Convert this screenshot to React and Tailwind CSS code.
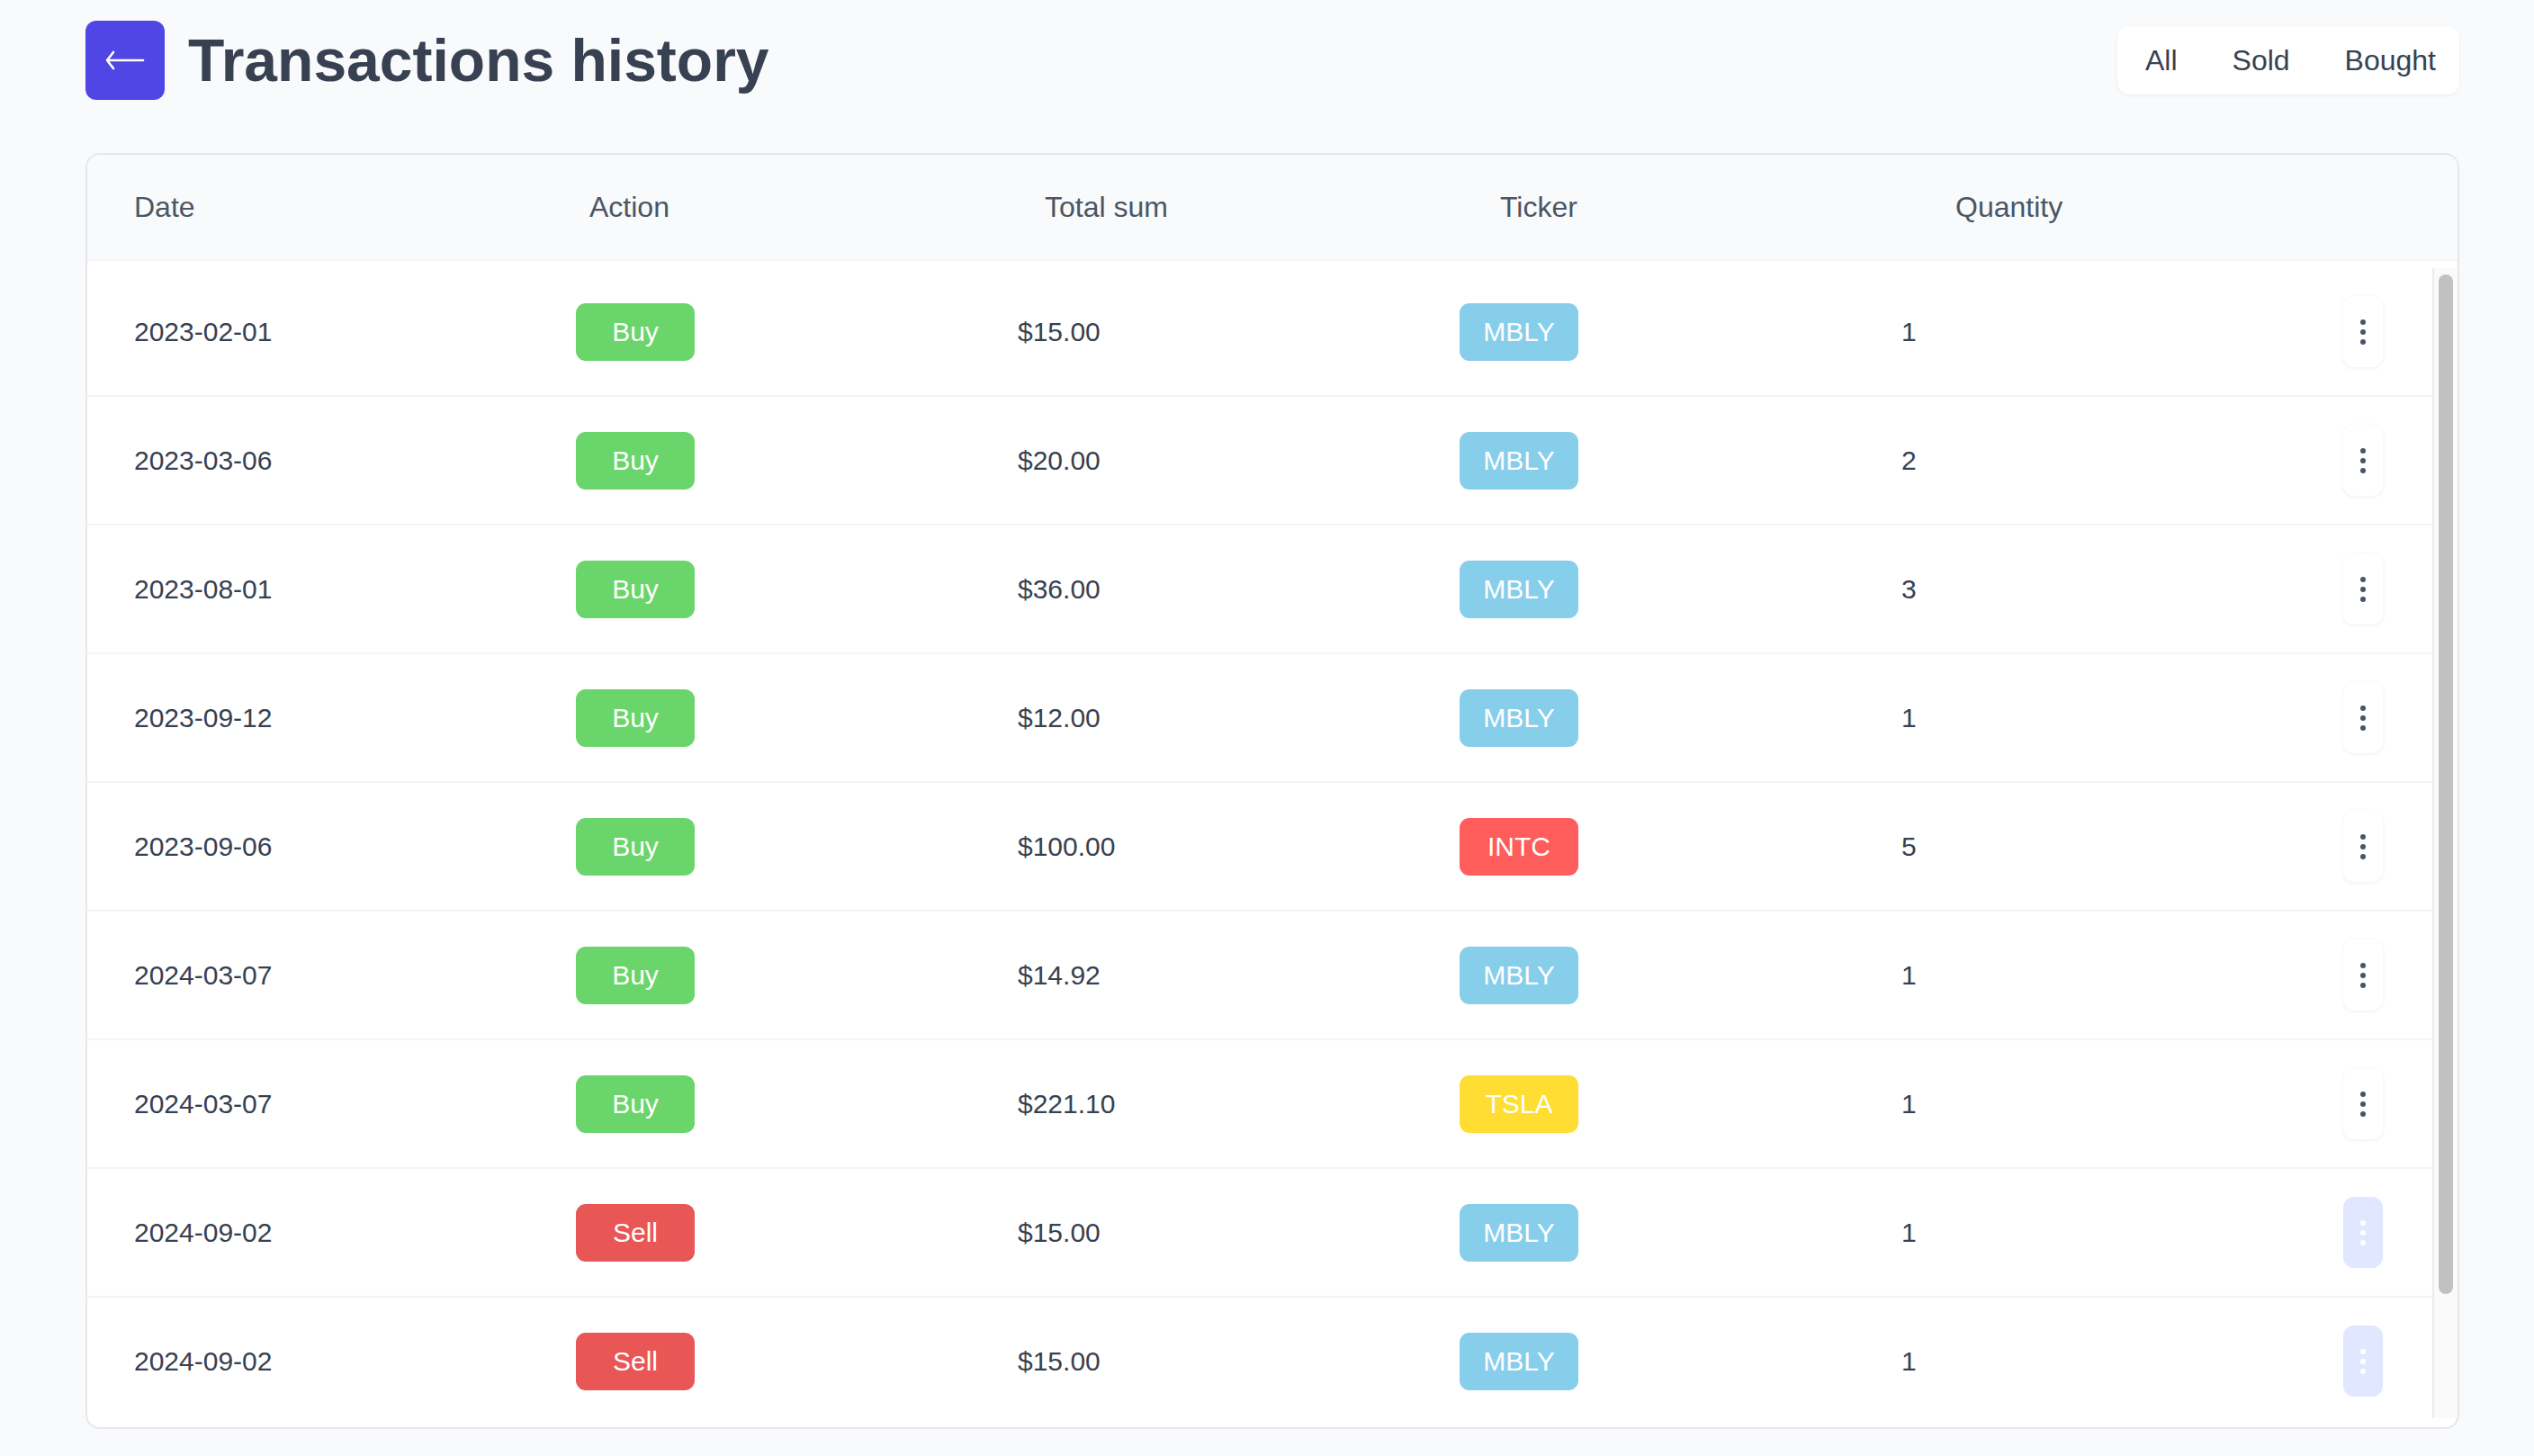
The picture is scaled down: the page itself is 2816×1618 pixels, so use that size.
import React from "react";

const rows = [
  { date: "2023-02-01", action: "Buy", sum: "$15.00", ticker: "MBLY", qty: "1", muted: false },
  { date: "2023-03-06", action: "Buy", sum: "$20.00", ticker: "MBLY", qty: "2", muted: false },
  { date: "2023-08-01", action: "Buy", sum: "$36.00", ticker: "MBLY", qty: "3", muted: false },
  { date: "2023-09-12", action: "Buy", sum: "$12.00", ticker: "MBLY", qty: "1", muted: false },
  { date: "2023-09-06", action: "Buy", sum: "$100.00", ticker: "INTC", qty: "5", muted: false },
  { date: "2024-03-07", action: "Buy", sum: "$14.92", ticker: "MBLY", qty: "1", muted: false },
  { date: "2024-03-07", action: "Buy", sum: "$221.10", ticker: "TSLA", qty: "1", muted: false },
  { date: "2024-09-02", action: "Sell", sum: "$15.00", ticker: "MBLY", qty: "1", muted: true },
  { date: "2024-09-02", action: "Sell", sum: "$15.00", ticker: "MBLY", qty: "1", muted: true },
];

const actionColor = {
  Buy: "bg-[#6ad56a]",
  Sell: "bg-[#e85656]",
};

const tickerColor = {
  MBLY: "bg-[#87ceeb]",
  INTC: "bg-[#ff5c5c]",
  TSLA: "bg-[#ffdd33]",
};

function Badge({ className, children }) {
  return (
    <span
      className={`w-[132px] h-[64px] rounded-[11px] flex items-center justify-center text-white text-[30px] leading-none ${className}`}
    >
      {children}
    </span>
  );
}

function DotsButton({ muted }) {
  return (
    <button
      className={`w-[44px] h-[79px] rounded-[12px] flex flex-col items-center justify-center gap-[5px] ${
        muted ? "bg-[#e0e7ff]" : "bg-white shadow-[0_1px_4px_rgba(0,0,0,0.07)]"
      }`}
    >
      <span className={`w-[6px] h-[6px] rounded-full ${muted ? "bg-white" : "bg-[#475569]"}`} />
      <span className={`w-[6px] h-[6px] rounded-full ${muted ? "bg-white" : "bg-[#475569]"}`} />
      <span className={`w-[6px] h-[6px] rounded-full ${muted ? "bg-white" : "bg-[#475569]"}`} />
    </button>
  );
}

export default function App() {
  return (
    <div className="min-h-screen bg-[#f9fafb] font-['Liberation_Sans',Arial,sans-serif]">
      <div className="pl-[95px] pr-[83px] pt-[23px]">
        <header className="flex items-center justify-between h-[88px]">
          <div className="flex items-center gap-[26px]">
            <button className="w-[88px] h-[88px] rounded-[12px] bg-[#4f46e5] flex items-center justify-center">
              <svg width="44" height="22" viewBox="0 0 44 22" fill="none">
                <path
                  d="M2 11 H42 M2 11 L9 2 M2 11 L9 20"
                  stroke="white"
                  strokeWidth="2.6"
                  strokeLinecap="round"
                  strokeLinejoin="round"
                />
              </svg>
            </button>
            <h1 className="text-[66px] font-bold text-[#374151] leading-none">Transactions history</h1>
          </div>
          <div className="h-[76px] bg-white rounded-[14px] shadow-[0_1px_4px_rgba(0,0,0,0.06)] flex items-center pl-[31px] pr-[26px] gap-[61px] text-[32px] leading-none text-[#374151]">
            <span>All</span>
            <span>Sold</span>
            <span>Bought</span>
          </div>
        </header>

        <div className="mt-[59px] border-2 border-[#e5e7eb] rounded-[16px] bg-white overflow-hidden pb-[10px]">
          <div className="h-[118px] bg-[#f9fafb] border-b-2 border-[#f3f4f6] grid grid-cols-5 px-[52px] items-center text-[32px] leading-none text-[#4b5563]">
            <span>Date</span>
            <span>Action</span>
            <span>Total sum</span>
            <span>Ticker</span>
            <span>Quantity</span>
          </div>

          <div className="flex h-[1286px] pt-[8px]">
            <div className="flex-1 overflow-hidden">
              {rows.map((r, i) => (
                <div
                  key={i}
                  className="h-[143px] border-b-2 border-[#f3f4f6] grid grid-cols-[491px_491px_491px_491px_491px_1fr] items-center pl-[52px] text-[30px] leading-none text-[#374151]"
                >
                  <span>{r.date}</span>
                  <div>
                    <Badge className={actionColor[r.action]}>{r.action}</Badge>
                  </div>
                  <span>{r.sum}</span>
                  <div>
                    <Badge className={tickerColor[r.ticker]}>{r.ticker}</Badge>
                  </div>
                  <span>{r.qty}</span>
                  <div>
                    <DotsButton muted={r.muted} />
                  </div>
                </div>
              ))}
            </div>
            <div className="w-[28px] border-l-2 border-[#ebebeb] bg-[#fafafa] pt-[7px] flex justify-center">
              <div className="w-[16px] h-[1133px] rounded-full bg-[#c1c1c1]" />
            </div>
          </div>
        </div>
      </div>
    </div>
  );
}
